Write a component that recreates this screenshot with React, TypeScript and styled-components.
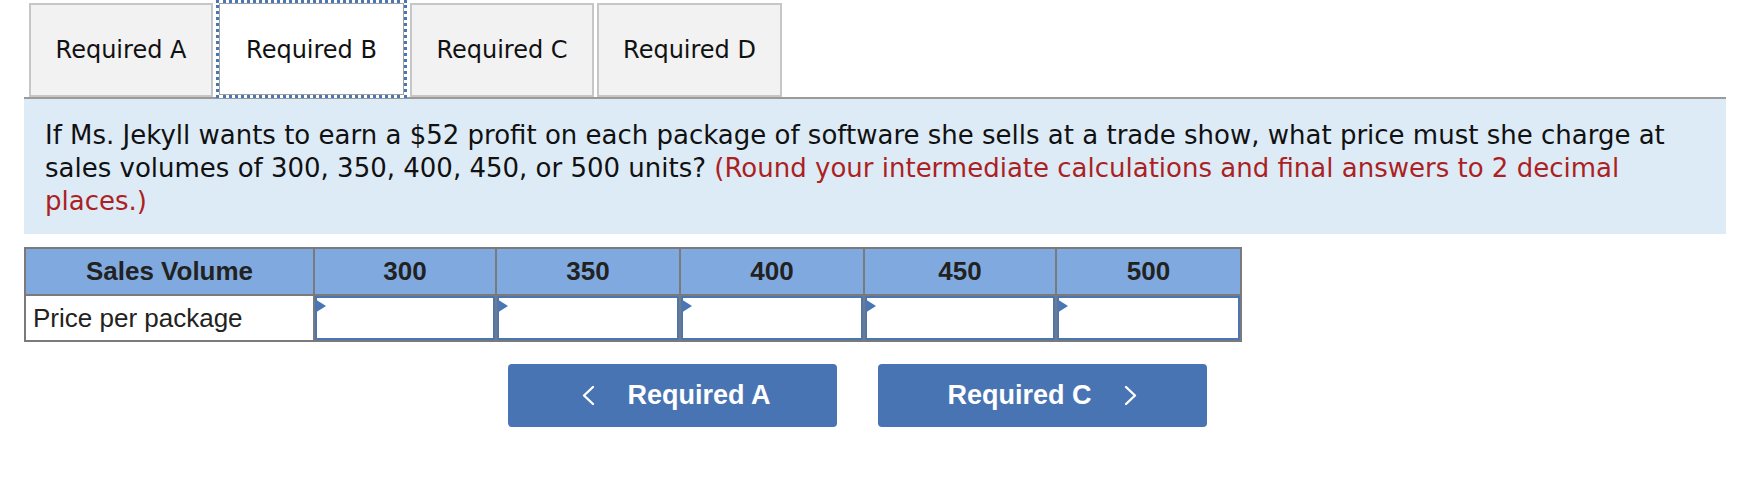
import React from "react";
import styled, { createGlobalStyle } from "styled-components";

const Global = createGlobalStyle`
  html, body { margin: 0; padding: 0; background: #ffffff; }
  body { font-family: "DejaVu Sans", Verdana, sans-serif; }
`;

const Page = styled.div`
  width: 1702px;
  margin-left: 24px;
`;

const TabBar = styled.div`
  display: flex;
  align-items: flex-end;
  gap: 3px;
  padding-left: 5px;
  height: 97px;
  border-bottom: 2px solid #9a9a9a;
`;

const Tab = styled.button<{ $active?: boolean; $w: number }>`
  box-sizing: border-box;
  width: ${(p) => p.$w}px;
  height: ${(p) => (p.$active ? 98 : 94)}px;
  margin-bottom: ${(p) => (p.$active ? -1 : 0)}px;
  background: ${(p) => (p.$active ? "#ffffff" : "#f2f2f2")};
  border: ${(p) => (p.$active ? "3px dotted #4a76b5" : "2px solid #c6c6c6")};
  box-shadow: ${(p) => (p.$active ? "inset 0 0 0 1px #a0a0a0" : "none")};
  font-family: "DejaVu Sans", Verdana, sans-serif;
  font-size: 24px;
  color: #111;
  padding: ${(p) => (p.$active ? "2px 0 0" : "0")};
  cursor: pointer;
`;

const Question = styled.div`
  background: #ddebf7;
  padding: 20px 24px 16px 21px;
  font-size: 26px;
  line-height: 33px;
  color: #111;
`;

const Hint = styled.span`
  color: #ac1f22;
`;

const Grid = styled.table`
  margin-top: 13px;
  border-collapse: collapse;
  table-layout: fixed;
  width: 1216px;
  font-family: "Liberation Sans", Arial, sans-serif;
`;

const HeadCell = styled.th`
  height: 45px;
  padding: 0;
  background: #80aadf;
  border: 2px solid #7a7a7a;
  font-weight: bold;
  font-size: 26px;
  color: #222;
  text-align: center;
`;

const LabelCell = styled.td`
  height: 44px;
  padding: 0 0 0 7px;
  border: 2px solid #7a7a7a;
  font-size: 26px;
  color: #222;
  text-align: left;
`;

const InputCell = styled.td`
  position: relative;
  height: 44px;
  padding: 0;
  border: 2px solid #7a7a7a;
`;

const Entry = styled.input`
  display: block;
  box-sizing: border-box;
  width: 100%;
  height: 44px;
  border: 2px solid #4a76b5;
  background: #fff;
  margin: 0;
  outline: none;
  font-size: 22px;
`;

const Flag = styled.span`
  position: absolute;
  left: 0;
  top: 3px;
  width: 0;
  height: 0;
  border-top: 7px solid transparent;
  border-bottom: 7px solid transparent;
  border-left: 11px solid #4a76b5;
`;

const Nav = styled.div`
  display: flex;
  justify-content: center;
  gap: 41px;
  width: 1666px;
  margin-top: 22px;
`;

const NavButton = styled.button<{ $lead?: number }>`
  box-sizing: border-box;
  width: 329px;
  height: 63px;
  background: #4874b3;
  border: none;
  border-radius: 4px;
  color: #fff;
  font-family: "Liberation Sans", Arial, sans-serif;
  font-weight: bold;
  font-size: 27px;
  display: flex;
  align-items: center;
  justify-content: center;
  gap: 32px;
  padding: 0 0 0 ${(p) => p.$lead ?? 0}px;
  cursor: pointer;
`;

const Chevron = ({ dir }: { dir: "left" | "right" }) => (
  <svg width="13" height="21" viewBox="0 0 13 21" aria-hidden="true">
    <polyline
      points={dir === "left" ? "11,2 2,10.5 11,19" : "2,2 11,10.5 2,19"}
      fill="none"
      stroke="#fff"
      strokeWidth="2.4"
      strokeLinecap="round"
      strokeLinejoin="round"
    />
  </svg>
);

const tabs = [
  { label: "Required A", w: 184 },
  { label: "Required B", w: 191, active: true },
  { label: "Required C", w: 184 },
  { label: "Required D", w: 185 },
];

const volumes = ["300", "350", "400", "450", "500"];
const colWidths = [289, 182, 184, 184, 192, 185];

export default function App() {
  return (
    <>
      <Global />
      <Page>
        <TabBar>
          {tabs.map((t) => (
            <Tab key={t.label} $w={t.w} $active={t.active}>
              {t.label}
            </Tab>
          ))}
        </TabBar>
        <Question>
          If Ms. Jekyll wants to earn a $52 profit on each package of software she sells at a trade
          show, what price must she charge at sales volumes of 300, 350, 400, 450, or 500 units?{" "}
          <Hint>(Round your intermediate calculations and final answers to 2 decimal places.)</Hint>
        </Question>
        <Grid>
          <colgroup>
            {colWidths.map((w, i) => (
              <col key={i} style={{ width: w }} />
            ))}
          </colgroup>
          <thead>
            <tr>
              <HeadCell>Sales Volume</HeadCell>
              {volumes.map((v) => (
                <HeadCell key={v}>{v}</HeadCell>
              ))}
            </tr>
          </thead>
          <tbody>
            <tr>
              <LabelCell>Price per package</LabelCell>
              {volumes.map((v) => (
                <InputCell key={v}>
                  <Entry type="text" aria-label={`Price at ${v}`} />
                  <Flag />
                </InputCell>
              ))}
            </tr>
          </tbody>
        </Grid>
        <Nav>
          <NavButton $lead={9}>
            <Chevron dir="left" />
            <span>Required A</span>
          </NavButton>
          <NavButton>
            <span>Required C</span>
            <Chevron dir="right" />
          </NavButton>
        </Nav>
      </Page>
    </>
  );
}
